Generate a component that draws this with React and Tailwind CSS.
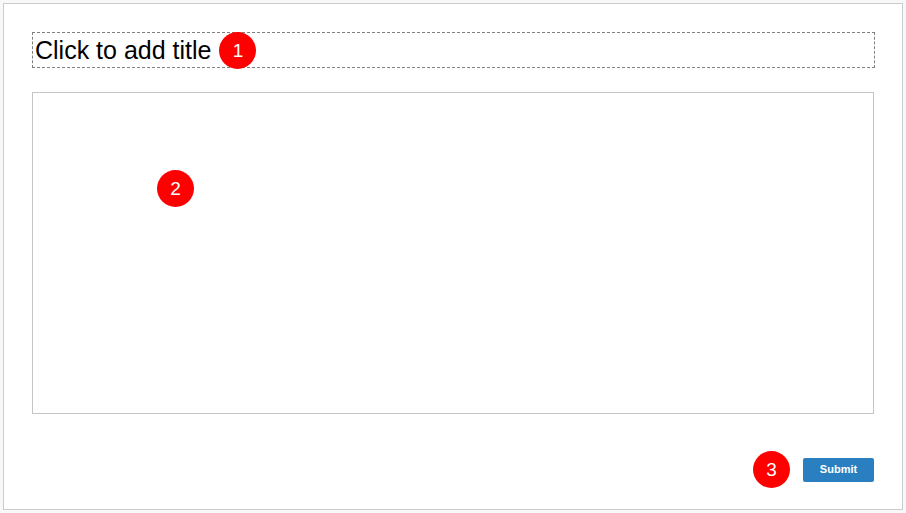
import React from 'react';

const Badge = ({ n, className = '' }) => (
  <span
    className={`flex items-center justify-center w-[37px] h-[37px] rounded-full bg-[#ff0000] text-white text-[19px] leading-none ${className}`}
  >
    {n}
  </span>
);

const App = () => {
  return (
    <div className="min-h-screen bg-[#f8f8f8] p-[3px]" style={{ fontFamily: '"Liberation Sans", Arial, sans-serif' }}>
      <div className="w-[900px] h-[507px] bg-white border border-[#cccccc] pt-[28px] pl-[28px] flex flex-col">
        <div className="w-[843px] h-[36px] border border-dashed border-[#808080] flex items-center pl-[2px]">
          <span className="text-[25px] text-black leading-none">Click to add title</span>
          <Badge n="1" className="ml-[8px]" />
        </div>

        <div className="relative mt-[24px] w-[842px] h-[322px] border border-[#c4c4c4]">
          <Badge n="2" className="absolute left-[124px] top-[77px]" />
        </div>

        <div className="mt-[37px] w-[842px] flex items-center justify-end">
          <Badge n="3" className="mr-[13px]" />
          <button className="w-[71px] h-[24px] rounded-[2px] bg-[#2a7fc0] text-white text-[11px] font-bold">
            Submit
          </button>
        </div>
      </div>
    </div>
  );
};

export default App;
